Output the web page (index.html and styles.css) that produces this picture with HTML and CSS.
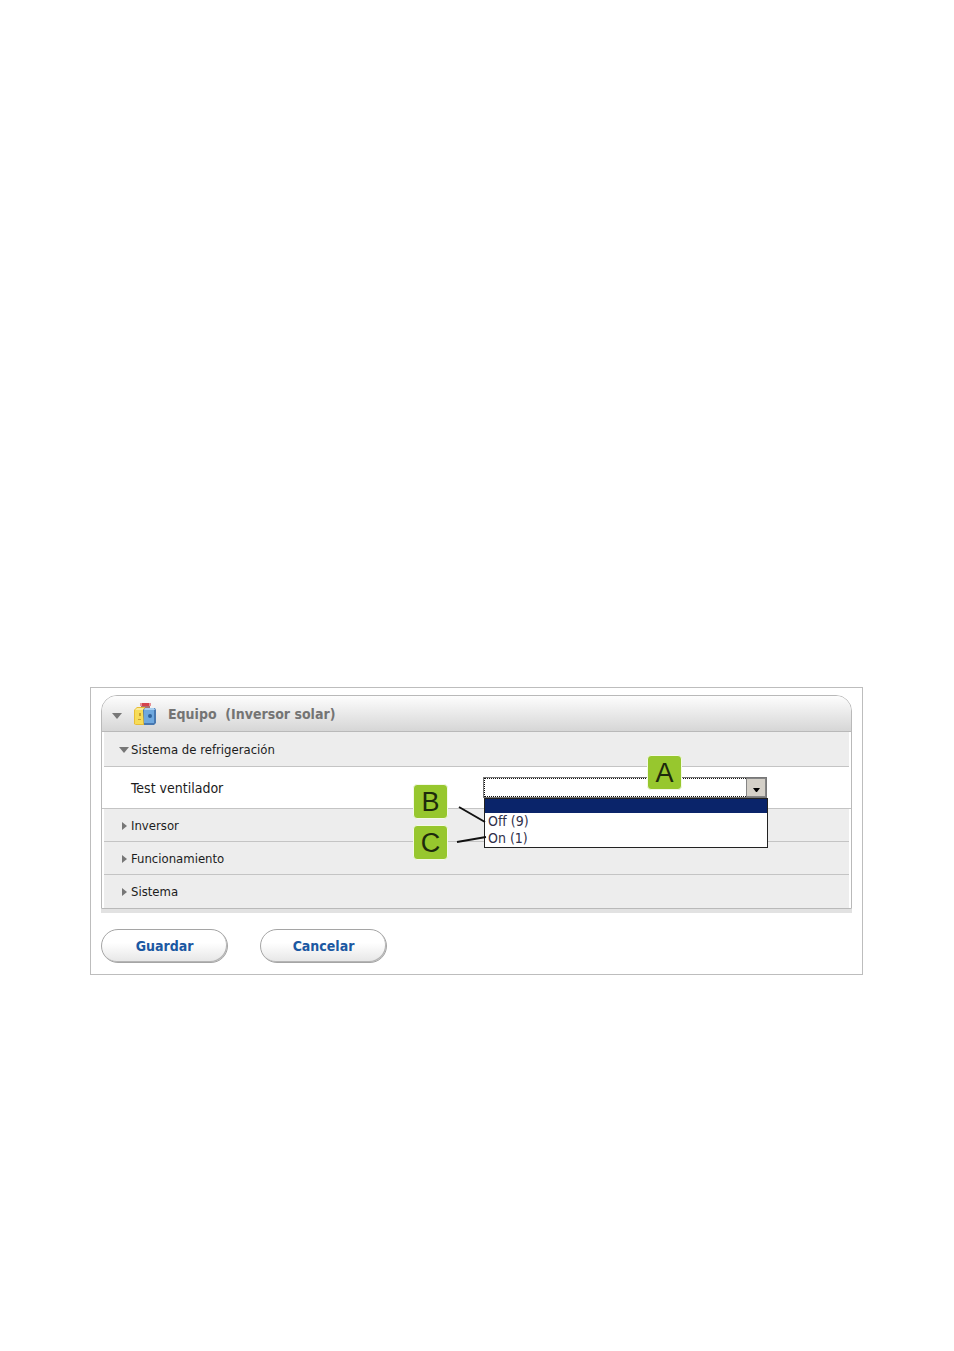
FILE: index.html
```
<!DOCTYPE html>
<html lang="es">
<head>
    <meta charset="UTF-8">
    <meta name="viewport" content="width=device-width, initial-scale=1.0">
    <title>Equipo (Inversor solar)</title>
    <link rel="stylesheet" href="styles.css">
</head>
<body>
    <form class="frame">
        <div class="panel">
            <button type="button" class="panel-header" aria-expanded="true">
                <svg class="arrow-down" viewBox="0 0 10 6"><path d="M0 0h10L5 6z"/></svg>
                <svg class="device-icon" viewBox="0 0 24 24">
                    <path d="M7 1h11v3H7z" fill="#d5424c"/>
                    <path d="M8 4h9v4H8z" fill="#a9706f"/>
                    <path d="M7 1h2v3H7zM16 1h2v3h-2z" fill="#e79095"/>
                    <path d="M1 8l3-3h8v18H3l-2-1z" fill="#e8bd35"/>
                    <path d="M2 8h8v14H2z" fill="#f7dc58"/>
                    <path d="M2 8l2-2h7l-1 2z" fill="#faeb9c"/>
                    <path d="M6 11h2v3H6zM5 17h3v1H5z" fill="#c9a02e"/>
                    <path d="M10 8l2-2h10l1 2v13l-2 2H11z" fill="#4878b0"/>
                    <path d="M11 8h10v13H11z" fill="#6ea8df"/>
                    <path d="M12 6h9l1 2H11z" fill="#a8cef0"/>
                    <circle cx="17" cy="14" r="2" fill="#2f629c"/>
                </svg>
                <span class="panel-title">Equipo&nbsp; (Inversor solar)</span>
            </button>

            <button type="button" class="section" aria-expanded="true">
                <svg class="arrow-down" viewBox="0 0 10 6"><path d="M0 0h10L5 6z"/></svg>
                Sistema de refrigeración
            </button>

            <div class="field">
                <label for="fanTest">Test ventilador</label>
                <div class="dropdown">
                    <select id="fanTest">
                        <option></option>
                        <option>Off (9)</option>
                        <option>On (1)</option>
                    </select>
                    <span class="dropdown-button"><svg viewBox="0 0 7 4"><path d="M0 0h7L4 4H3z"/></svg></span>
                    <ul class="dropdown-list" role="listbox" aria-label="Test ventilador">
                        <li class="selected" role="option" aria-selected="true"></li>
                        <li role="option">Off (9)</li>
                        <li role="option">On (1)</li>
                    </ul>
                    <svg class="pointers" viewBox="0 0 32 40">
                        <path d="M3 4l26 15M1 39l29-5"/>
                    </svg>
                    <span class="marker marker-a">A</span>
                    <span class="marker marker-b">B</span>
                    <span class="marker marker-c">C</span>
                </div>
            </div>

            <button type="button" class="section" aria-expanded="false">
                <svg class="arrow-right" viewBox="0 0 5 8"><path d="M0 0v8l5-4z"/></svg>
                Inversor
            </button>
            <button type="button" class="section" aria-expanded="false">
                <svg class="arrow-right" viewBox="0 0 5 8"><path d="M0 0v8l5-4z"/></svg>
                Funcionamiento
            </button>
            <button type="button" class="section" aria-expanded="false">
                <svg class="arrow-right" viewBox="0 0 5 8"><path d="M0 0v8l5-4z"/></svg>
                Sistema
            </button>
        </div>

        <div class="actions">
            <button type="submit" class="action">Guardar</button>
            <button type="reset" class="action">Cancelar</button>
        </div>
    </form>
</body>
</html>
```
FILE: styles.css
```
* {
    box-sizing: border-box;
    margin: 0;
    padding: 0;
}

body {
    padding: 687px 91px 40px 90px;
    font-family: Tahoma, "DejaVu Sans Condensed", "DejaVu Sans", sans-serif;
    font-size: 14px;
    color: #1c1c1c;
    background: white;
}

button, select {
    font: inherit;
    color: inherit;
}

.frame {
    padding: 7px 10px 11px;
    border: 1px solid #bdbdbd;
}

.panel {
    border: 1px solid #b9b9b9;
    border-radius: 16px 16px 0 0;
    box-shadow: 0 4px 0 #e2e2e2;
}

.panel-header {
    display: flex;
    align-items: center;
    width: 100%;
    height: 36px;
    padding-left: 10px;
    border: none;
    border-bottom: 1px solid #b9b9b9;
    border-radius: 15px 15px 0 0;
    background: linear-gradient(#fdfdfd, #d6d6d6);
}

.panel-title {
    margin-left: 11px;
    font-weight: bold;
    color: #747474;
}

.arrow-down {
    width: 10px;
    height: 6px;
    fill: #777;
}

.panel-header .arrow-down {
    margin-top: 4px;
}

.arrow-right {
    width: 5px;
    height: 8px;
    margin: 0 2px 0 3px;
    fill: #777;
}

.device-icon {
    width: 24px;
    height: 24px;
    margin-left: 11px;
}

.section {
    display: flex;
    align-items: center;
    gap: 2px;
    width: 100%;
    height: 33px;
    padding-left: 15px;
    border: 2px solid white;
    border-width: 0 2px;
    font-size: 13px;
    background: #ededed;
    box-shadow: inset 0 -1px #c4c4c4;
}

.panel-header + .section {
    height: 35px;
}

.section:last-child {
    box-shadow: none;
}

.field {
    display: grid;
    grid-template-columns: 352px 284px;
    align-items: center;
    height: 42px;
    padding-left: 29px;
    border-bottom: 1px solid #c4c4c4;
}

.dropdown {
    position: relative;
    height: 21px;
}

.dropdown select {
    display: block;
    width: 100%;
    height: 21px;
    appearance: none;
    border: 1px solid #777;
    border-radius: 0;
    outline: 1px dotted #111;
    outline-offset: -2px;
    background: white;
}

.dropdown-button {
    position: absolute;
    top: 1px;
    right: 1px;
    display: flex;
    align-items: center;
    justify-content: center;
    width: 20px;
    height: 19px;
    padding-top: 4px;
    border: 1px solid #858585;
    background: #d4d0c8;
    pointer-events: none;
}

.dropdown-button svg {
    width: 7px;
    height: 4px;
}

.dropdown-list {
    position: absolute;
    top: 21px;
    left: 1px;
    width: 100%;
    border: 1px solid #222;
    list-style: none;
    line-height: 17px;
    color: #30304a;
    background: white;
    z-index: 1;
}

.dropdown-list li {
    height: 17px;
    padding-left: 3px;
}

.dropdown-list .selected {
    height: 14px;
    background: #0a246a;
}

.pointers {
    position: absolute;
    top: 26px;
    left: -27px;
    width: 32px;
    height: 40px;
    fill: none;
    stroke: #111;
    stroke-width: 2;
    z-index: 2;
}

.marker {
    position: absolute;
    width: 35px;
    height: 35px;
    border: 1px solid #f4fae6;
    border-radius: 4px;
    font-family: "Liberation Sans", Arial, sans-serif;
    font-size: 27px;
    line-height: 34px;
    text-align: center;
    color: #1d2a0c;
    background: #97c72e;
    z-index: 2;
}

.marker-a {
    top: -22px;
    left: 164px;
}

.marker-b {
    top: 7px;
    left: -70px;
}

.marker-c {
    top: 48px;
    left: -70px;
}

.actions {
    display: flex;
    gap: 32px;
    margin-top: 20px;
}

.action {
    width: 127px;
    height: 34px;
    border: 1px solid #a5a5a5;
    border-radius: 17px;
    font-weight: bold;
    color: #1b58a2;
    background: linear-gradient(#fff 40%, #e6e6e6);
    box-shadow: inset -1px -1px #b5b5b5;
}
```
